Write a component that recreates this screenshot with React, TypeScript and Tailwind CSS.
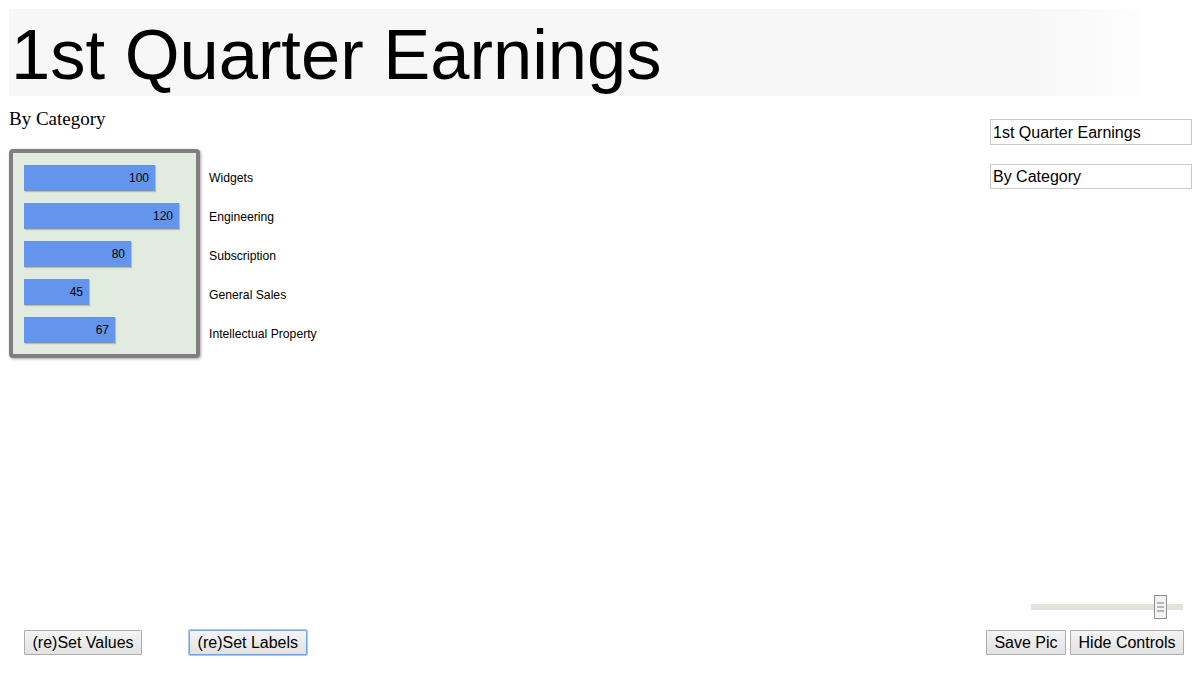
import React from 'react';

const categories = [
    { label: 'Widgets', value: 100 },
    { label: 'Engineering', value: 120 },
    { label: 'Subscription', value: 80 },
    { label: 'General Sales', value: 45 },
    { label: 'Intellectual Property', value: 67 },
];

const Btn: React.FC<{ children: React.ReactNode; focused?: boolean; className?: string }> = ({ children, focused, className }) => (
    <button
        className={`h-[25px] px-[7.5px] text-[16px] leading-[23px] text-black border rounded-[1px] bg-[linear-gradient(#f4f4f4,#e2e2e2)] ${
            focused ? 'border-[#6ea4ec] shadow-[0_0_0_1px_#a9c9f3]' : 'border-[#adadad]'
        } ${className ?? ''}`}
    >
        {children}
    </button>
);

const Slider: React.FC = () => (
    <div className="relative w-[152px] h-[24px]">
        <div className="absolute left-0 right-0 top-[9px] h-[6px] bg-[#e6e2db]" />
        <div className="absolute left-[123px] top-0 w-[13px] h-[24px] bg-[#f3f2f0] border border-[#8f8f8f] flex flex-col items-center justify-center gap-[2px]">
            <div className="w-[7px] h-[2px] bg-[#b8b8b8]" />
            <div className="w-[7px] h-[2px] bg-[#b8b8b8]" />
            <div className="w-[7px] h-[2px] bg-[#b8b8b8]" />
        </div>
    </div>
);

export default function App() {
    return (
        <div className="h-screen flex flex-col bg-white text-black font-['Liberation_Sans',Arial,sans-serif]">
            {/* title bar */}
            <div className="mt-[9px] ml-[9px] w-[1131px] h-[87px] bg-[linear-gradient(to_right,#f7f7f7,#f7f7f7_90%,#fdfdfd)] pt-[6px]">
                <h1 className="ml-[2px] text-[70.5px] leading-[80px] font-normal whitespace-nowrap">1st Quarter Earnings</h1>
            </div>

            <div className="flex-1 flex justify-between pl-[9px] pr-[8px]">
                <div className="flex flex-col">
                    <div className="mt-[12px] font-['Liberation_Serif','Times_New_Roman',serif] text-[19px] leading-[22px]">By Category</div>
                    <div className="mt-[19px] flex">
                        <div className="w-[191px] border-[4px] border-[#7f7f7f] rounded-[4px] bg-[#e2ebe0] shadow-[1px_1px_3px_rgba(0,0,0,0.35)] pl-[11px] pt-[12px] pb-[11px] flex flex-col gap-[12px]">
                            {categories.map((c) => (
                                <div
                                    key={c.label}
                                    className="h-[26px] bg-[#6495ed] shadow-[1px_1px_1px_#c9bc7c] text-right pr-[6px] text-[12px] leading-[26px]"
                                    style={{ width: Math.round(c.value * 1.2) + 11 }}
                                >
                                    {c.value}
                                </div>
                            ))}
                        </div>
                        <div className="ml-[9px] pt-[10px] flex flex-col text-[12.2px]">
                            {categories.map((c) => (
                                <div key={c.label} className="h-[39px] leading-[39px] whitespace-nowrap">
                                    {c.label}
                                </div>
                            ))}
                        </div>
                    </div>
                </div>

                <div className="mt-[23px] w-[202px] flex flex-col gap-[19px]">
                    <input
                        readOnly
                        value="1st Quarter Earnings"
                        className="h-[26px] w-full border border-[#c8c8c8] px-[2px] pt-[1px] text-[16px] outline-none"
                    />
                    <input
                        readOnly
                        value="By Category"
                        className="h-[25px] w-full border border-[#c8c8c8] px-[2px] text-[16px] outline-none"
                    />
                </div>
            </div>

            <div className="flex items-end justify-between pl-[24px] pr-[16px] pb-[24px]">
                <div className="flex gap-[47px]">
                    <Btn>(re)Set Values</Btn>
                    <Btn focused>(re)Set Labels</Btn>
                </div>
                <div className="flex flex-col items-end">
                    <div className="mb-[11px] mr-[1px]">
                        <Slider />
                    </div>
                    <div className="flex gap-[4px]">
                        <Btn>Save Pic</Btn>
                        <Btn>Hide Controls</Btn>
                    </div>
                </div>
            </div>
        </div>
    );
}
